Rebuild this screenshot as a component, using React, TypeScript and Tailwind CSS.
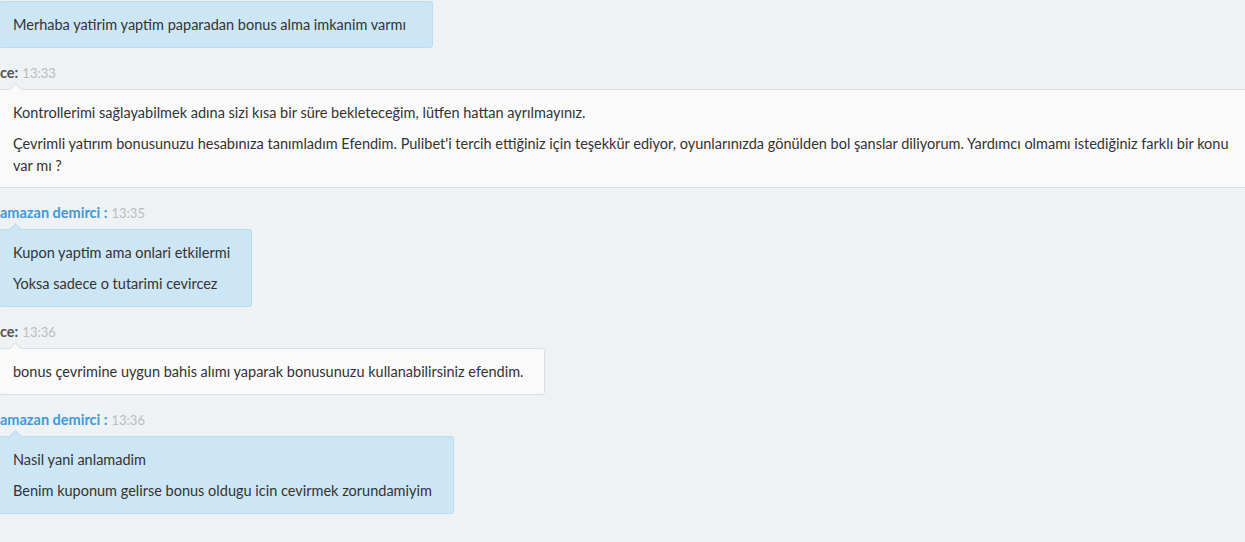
import React from 'react';

type Msg = {
  from: 'user' | 'agent';
  time: string;
  lines: string[];
};

const messages: Msg[] = [
  { from: 'agent', time: '13:33', lines: ["Kontrollerimi sağlayabilmek adına sizi kısa bir süre bekleteceğim, lütfen hattan ayrılmayınız.", "Çevrimli yatırım bonusunuzu hesabınıza tanımladım Efendim. Pulibet'i tercih ettiğiniz için teşekkür ediyor, oyunlarınızda gönülden bol şanslar diliyorum. Yardımcı olmamı istediğiniz farklı bir konu var mı ?"] },
  { from: 'user', time: '13:35', lines: ['Kupon yaptim ama onlari etkilermi', 'Yoksa sadece o tutarimi cevircez'] },
  { from: 'agent', time: '13:36', lines: ['bonus çevrimine uygun bahis alımı yaparak bonusunuzu kullanabilirsiniz efendim.'] },
  { from: 'user', time: '13:36', lines: ['Nasil yani anlamadim', 'Benim kuponum gelirse bonus oldugu icin cevirmek zorundamiyim'] },
];

function Caret({ user }: { user: boolean }) {
  return (
    <span
      className={
        'absolute -top-[5px] left-[11px] w-[9px] h-[9px] rotate-45 border-t border-l ' +
        (user ? 'bg-[#cce6f5] border-[#b9dcef]' : 'bg-[#fafafa] border-[#dddddd]')
      }
    />
  );
}

function Bubble({ msg, first }: { msg: Msg; first?: boolean }) {
  const user = msg.from === 'user';
  return (
    <div
      className={
        'relative -ml-px border pl-[13px] pt-3 ' +
        (user
          ? 'self-start pr-[21px] pb-[11px] rounded-[3px] bg-[#cce6f5] border-[#b9dcef]'
          : first
          ? 'w-[calc(100%+2px)] pr-[6px] pb-[10px] bg-[#fafafa] border-[#dddddd]'
          : 'self-start pr-[21px] pb-[11px] rounded-[3px] bg-[#fafafa] border-[#dddddd]')
      }
    >
      <Caret user={user} />
      <div className="relative flex flex-col gap-[9px]">
        {msg.lines.map((l, i) => (
          <p key={i} className="leading-[22px]">{l}</p>
        ))}
      </div>
    </div>
  );
}

function Label({ msg }: { msg: Msg }) {
  const user = msg.from === 'user';
  return (
    <div className="mt-[15px] mb-[6px] leading-5 whitespace-nowrap">
      {user ? (
        <span className="text-[14.5px] font-bold text-[#3d9ad8]">amazan demirci :</span>
      ) : (
        <span className="text-[14.5px] font-bold text-[#555555]">ce:</span>
      )}
      <span className="ml-1 text-[13px] text-[#bbbbbb]">{msg.time}</span>
    </div>
  );
}

export default function App(): React.JSX.Element {
  return (
    <div
      className="w-[1245px] h-[542px] overflow-hidden bg-[#eef2f5] text-[14.5px] text-[#333333]"
      style={{ fontFamily: 'Lato, "Noto Sans", sans-serif' }}
    >
      <div className="flex flex-col pt-px">
        <div className="self-start -ml-px rounded-[3px] border border-[#b9dcef] bg-[#cce6f5] pl-[13px] pr-[26px] pt-3 pb-[11px]">
          <p className="leading-[22px]">Merhaba yatirim yaptim paparadan bonus alma imkanim varmı</p>
        </div>
        {messages.map((m, i) => (
          <React.Fragment key={i}>
            <Label msg={m} />
            <Bubble msg={m} first={i === 0} />
          </React.Fragment>
        ))}
      </div>
    </div>
  );
}
